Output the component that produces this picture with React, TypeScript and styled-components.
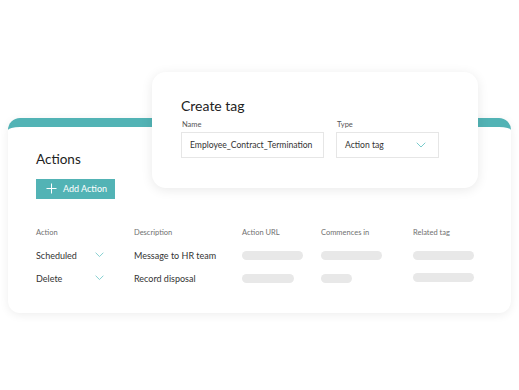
import React from "react";
import styled, { createGlobalStyle } from "styled-components";

const Global = createGlobalStyle`
  html, body { margin: 0; padding: 0; background: #ffffff; }
  body { font-family: Lato, "Noto Sans", "Liberation Sans", sans-serif; color: #2b2b2b; }
`;

const TEAL = "#52b3b5";

const Stage = styled.div`
  position: relative;
  width: 519px;
  height: 390px;
  padding: 118px 0 0 8px;
  box-sizing: border-box;
  overflow: hidden;
`;

const Card = styled.div`
  width: 503px;
  height: 195px;
  box-sizing: border-box;
  background: #fff;
  border-radius: 12px;
  border-top: 9px solid ${TEAL};
  box-shadow: 0 2px 10px rgba(0, 0, 0, 0.07);
  padding: 26px 28px 0 28px;
  display: flex;
  flex-direction: column;
`;

const Title = styled.div<{ $size: number }>`
  font-size: ${(p) => p.$size}px;
  line-height: 1;
  color: #222;
  font-weight: 400;
`;

const AddButton = styled.div`
  margin-top: 12px;
  width: 79px;
  height: 20px;
  background: ${TEAL};
  color: #fff;
  display: flex;
  align-items: center;
  gap: 6px;
  padding-left: 10px;
  box-sizing: border-box;
  font-size: 9px;
`;

const Table = styled.div`
  margin-top: 22px;
  display: grid;
  grid-template-columns: 98px 108px 79px 92px 1fr;
  grid-auto-rows: 23px;
  align-items: center;
`;

const Head = styled.div`
  font-size: 7.5px;
  color: #707070;
`;

const Cell = styled.div`
  font-size: 9px;
  color: #333;
`;

const ActionCell = styled(Cell)`
  width: 68px;
  display: flex;
  justify-content: space-between;
  align-items: center;
`;

const Skeleton = styled.div<{ $w: number; $dy?: number }>`
  width: ${(p) => p.$w}px;
  height: 9px;
  border-radius: 5px;
  background: #e8e8e8;
  transform: translateY(${(p) => p.$dy ?? 0}px);
`;

const Popup = styled.div`
  position: absolute;
  left: 152px;
  top: 72px;
  width: 326px;
  height: 116px;
  box-sizing: border-box;
  background: #fff;
  border-radius: 14px;
  box-shadow: 0 2px 12px rgba(0, 0, 0, 0.09);
  padding: 27px 29px 0 29px;
`;

const Fields = styled.div`
  margin-top: 7px;
  display: flex;
  gap: 12px;
`;

const Field = styled.div`
  display: flex;
  flex-direction: column;
  gap: 3px;
`;

const Label = styled.div`
  font-size: 7.5px;
  color: #555;
  padding-left: 1px;
`;

const Input = styled.div<{ $w: number }>`
  width: ${(p) => p.$w}px;
  height: 26px;
  box-sizing: border-box;
  border: 1px solid #e6e6e6;
  display: flex;
  align-items: center;
  justify-content: space-between;
  padding: 0 12px 0 8px;
  font-size: 8.6px;
  color: #333;
`;

const Chevron = ({ w = 9, color = "#79cbcc" }: { w?: number; color?: string }) => (
  <svg width={w} height={w / 2 + 1} viewBox="0 0 10 6" fill="none">
    <path d="M1 1l4 4 4-4" stroke={color} strokeWidth="1" strokeLinecap="round" strokeLinejoin="round" />
  </svg>
);

const Plus = () => (
  <svg width="11" height="11" viewBox="0 0 11 11" fill="none">
    <path d="M5.5 0.5v10M0.5 5.5h10" stroke="#fff" strokeWidth="1" />
  </svg>
);

export default function App() {
  return (
    <>
      <Global />
      <Stage>
        <Card>
          <Title $size={13.5}>Actions</Title>
          <AddButton>
            <Plus />
            <span>Add Action</span>
          </AddButton>
          <Table>
            <Head>Action</Head>
            <Head>Description</Head>
            <Head>Action URL</Head>
            <Head>Commences in</Head>
            <Head>Related tag</Head>

            <ActionCell>
              <span>Scheduled</span>
              <Chevron />
            </ActionCell>
            <Cell>Message to HR team</Cell>
            <Skeleton $w={61} />
            <Skeleton $w={61} />
            <Skeleton $w={61} />

            <ActionCell>
              <span>Delete</span>
              <Chevron />
            </ActionCell>
            <Cell>Record disposal</Cell>
            <Skeleton $w={52} />
            <Skeleton $w={31} />
            <Skeleton $w={61} $dy={-1} />
          </Table>
        </Card>
        <Popup>
          <Title $size={14}>Create tag</Title>
          <Fields>
            <Field>
              <Label>Name</Label>
              <Input $w={143}>Employee_Contract_Termination</Input>
            </Field>
            <Field>
              <Label>Type</Label>
              <Input $w={103}>
                <span>Action tag</span>
                <Chevron w={10} />
              </Input>
            </Field>
          </Fields>
        </Popup>
      </Stage>
    </>
  );
}
